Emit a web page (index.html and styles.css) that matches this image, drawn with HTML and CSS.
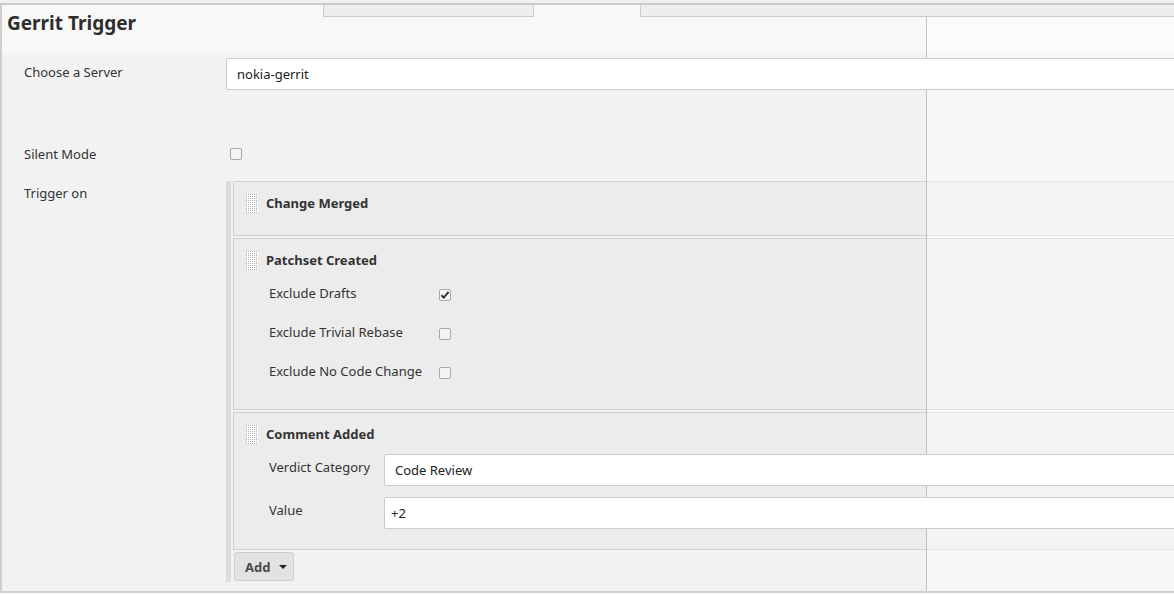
FILE: index.html
```html
<!DOCTYPE html>
<html>
<head>
<meta charset="utf-8">
<title>Gerrit Trigger</title>
<link rel="stylesheet" href="styles.css">
</head>
<body>
<div class="topbar"></div>
<div class="panel">
  <div class="head">
    <div class="tabs">
      <div class="tab-spacer"></div>
      <div class="tab"></div>
      <div class="tab active"></div>
      <div class="tab rest"></div>
    </div>
    <h2 class="title">Gerrit Trigger</h2>
  </div>
  <div class="form">
    <div class="row row-server">
      <div class="label">Choose a Server</div>
      <div class="field"><div class="input">nokia-gerrit</div></div>
    </div>
    <div class="row row-silent">
      <div class="label">Silent Mode</div>
      <div class="field"><span class="checkbox"></span></div>
    </div>
    <div class="row row-trigger">
      <div class="label">Trigger on</div>
      <div class="field trigger-field">
        <div class="bar"></div>
        <div class="boxes">
          <div class="box box-merged">
            <div class="box-head">
              <svg class="handle" width="12" height="19" viewBox="0 0 12 19"><defs><pattern id="dots" width="2" height="2" patternUnits="userSpaceOnUse"><rect x="0" y="0" width="1" height="1" fill="#a9a9a9"/></pattern></defs><rect width="12" height="19" fill="#fff"/><rect width="12" height="19" fill="url(#dots)"/></svg>
              <span class="box-title">Change Merged</span>
            </div>
          </div>
          <div class="box box-patchset">
            <div class="box-head">
              <svg class="handle" width="12" height="19" viewBox="0 0 12 19"><rect width="12" height="19" fill="#fff"/><rect width="12" height="19" fill="url(#dots)"/></svg>
              <span class="box-title">Patchset Created</span>
            </div>
            <div class="options">
              <div class="opt"><span class="opt-label">Exclude Drafts</span><span class="checkbox checked"><svg width="10" height="10" viewBox="0 0 10 10"><path d="M1.5 5.2 L3.8 7.6 L8.6 1.8" fill="none" stroke="#333" stroke-width="2"/></svg></span></div>
              <div class="opt"><span class="opt-label">Exclude Trivial Rebase</span><span class="checkbox"></span></div>
              <div class="opt"><span class="opt-label">Exclude No Code Change</span><span class="checkbox"></span></div>
            </div>
          </div>
          <div class="box box-comment">
            <div class="box-head">
              <svg class="handle" width="12" height="19" viewBox="0 0 12 19"><rect width="12" height="19" fill="#fff"/><rect width="12" height="19" fill="url(#dots)"/></svg>
              <span class="box-title">Comment Added</span>
            </div>
            <div class="inner-rows">
              <div class="inner-row"><span class="inner-label">Verdict Category</span><div class="input input-verdict">Code Review</div></div>
              <div class="inner-row"><span class="inner-label">Value</span><div class="input input-value">+2</div></div>
            </div>
          </div>
          <button class="add-btn">Add <span class="caret"></span></button>
        </div>
      </div>
    </div>
  </div>
</div>
</body>
</html>
```

FILE: styles.css
```css
html, body {
  margin: 0;
  padding: 0;
  background: #fff;
  overflow: hidden;
  width: 1174px;
  height: 595px;
}
body {
  font-family: "Noto Sans", "Open Sans", sans-serif;
  font-size: 13px;
  color: #333;
}
.topbar {
  height: 3px;
  background: #f0f0f0;
  border-bottom: 2px solid #cacaca;
}
.panel {
  position: relative;
  width: 1220px;
  background: #f2f2f2;
  border-left: 2px solid #cfcfcf;
  border-bottom: 2px solid #cfcfcf;
}
.panel::after {
  content: "";
  position: absolute;
  left: 924px;
  top: 12px;
  right: 0;
  bottom: 0;
  background: rgba(255, 255, 255, 0.42);
  border-left: 1px solid rgba(0, 0, 0, 0.22);
  z-index: 1;
  pointer-events: none;
}
.head {
  background: #f8f8f8;
  height: 48px;
}
.tabs {
  display: flex;
  height: 12px;
}
.tab-spacer {
  width: 321px;
}
.tab {
  box-sizing: border-box;
  height: 12px;
  background: #eeeeee;
  border-left: 1px solid #cccccc;
  border-bottom: 1px solid #cccccc;
  width: 210px;
}
.tab.active {
  background: #f8f8f8;
  border-bottom: none;
  width: 107px;
}
.tab.rest {
  flex: 1;
}
.title {
  margin: -6px 0 0 0;
  padding: 0 0 0 5px;
  font-size: 19px;
  line-height: 24px;
  font-weight: 700;
  color: #2e2e2e;
}
.form {
  padding-top: 5px;
  padding-bottom: 9px;
}
.row {
  display: grid;
  grid-template-columns: 224px 1fr;
}
.label {
  padding-left: 22px;
  line-height: 18px;
}
.row-server .label {
  padding-top: 5px;
}
.input {
  position: relative;
  z-index: 2;
  box-sizing: border-box;
  height: 32px;
  background: #fff;
  border: 1px solid #cccccc;
  border-radius: 2px;
  line-height: 31px;
  padding-left: 10px;
  color: #222;
}
.row-silent {
  margin-top: 52px;
  height: 24px;
}
.row-silent .label {
  padding-top: 3px;
}
.row-silent .field {
  padding-left: 4px;
  padding-top: 6px;
}
.checkbox {
  display: inline-block;
  box-sizing: border-box;
  width: 12px;
  height: 12px;
  border: 1px solid #a8a8a8;
  border-radius: 2px;
  background: #f4f4f4;
  vertical-align: top;
  position: relative;
}
.checkbox svg {
  position: absolute;
  left: 0;
  top: 0;
}
.row-trigger {
  margin-top: 15px;
}
.row-trigger .label {
  padding-top: 3px;
}
.trigger-field {
  display: flex;
}
.bar {
  width: 5px;
  background: #dcdcdc;
  margin-right: 2px;
}
.boxes {
  flex: 1;
  padding-bottom: 1px;
}
.box {
  background: #ececec;
  border: 1px solid #d0d0d0;
  border-right: none;
  margin-bottom: 2px;
}
.box-head {
  display: flex;
  align-items: flex-start;
  padding: 11px 0 0 12px;
  height: 18px;
}
.handle {
  display: block;
  margin-top: 1px;
  margin-right: 8px;
}
.box-title {
  font-weight: 700;
  line-height: 20px;
}
.box-merged {
  height: 53px;
}
.options {
  padding: 16px 0 29px 35px;
}
.opt {
  display: flex;
  height: 18px;
  line-height: 19px;
  margin-bottom: 21px;
}
.opt:last-child {
  margin-bottom: 0;
}
.opt-label {
  width: 170px;
}
.opt .checkbox {
  margin-top: 5px;
}
.inner-rows {
  padding: 12px 0 20px 35px;
}
.inner-row {
  display: grid;
  grid-template-columns: 115px 1fr;
  margin-bottom: 11px;
}
.inner-row:last-child {
  margin-bottom: 0;
}
.inner-label {
  padding-top: 4px;
  line-height: 18px;
}
.input-value {
  padding-left: 6px;
}
.add-btn {
  display: flex;
  align-items: center;
  box-sizing: border-box;
  width: 60px;
  height: 29px;
  margin: 0 0 0 1px;
  padding: 0 0 0 10px;
  background: #e2e2e2;
  border: 1px solid #cccccc;
  border-radius: 3px;
  font-family: inherit;
  font-size: 13px;
  font-weight: 700;
  color: #4a4a4a;
}
.caret {
  display: inline-block;
  width: 0;
  height: 0;
  margin-left: 9px;
  border-left: 4px solid transparent;
  border-right: 4px solid transparent;
  border-top: 4px solid #222;
}
```
